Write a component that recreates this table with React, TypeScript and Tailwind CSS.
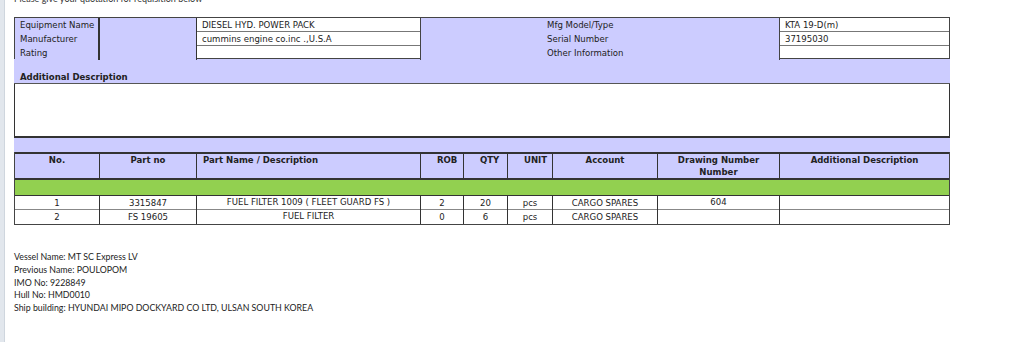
import React from "react";

const cols = "grid grid-cols-[85px_97px_224px_43px_44px_45px_105px_122px_1fr]";

const headers = ["No.", "Part no", "Part Name / Description", "ROB", "QTY", "UNIT", "Account", "Drawing Number Number", "Additional Description"];

const items = [
  { no: "1", part: "3315847", name: "FUEL FILTER 1009 ( FLEET GUARD FS )", rob: "2", qty: "20", unit: "pcs", account: "CARGO SPARES", drawing: "604", desc: "" },
  { no: "2", part: "FS 19605", name: "FUEL FILTER", rob: "0", qty: "6", unit: "pcs", account: "CARGO SPARES", drawing: "", desc: "" },
];

const vessel = [
  "Vessel Name: MT SC Express LV",
  "Previous Name: POULOPOM",
  "IMO No: 9228849",
  "Hull No: HMD0010",
  "Ship building: HYUNDAI MIPO DOCKYARD CO LTD, ULSAN SOUTH KOREA",
];

export default function App() {
  return (
    <div className="flex h-[342px] w-[1024px] overflow-hidden bg-white">
      <div className="w-[5px] shrink-0 border-r border-[#cfd6de] bg-[#e2e7ed]" />
      <div className="pl-[9px] text-[#222] [font-family:'DejaVu_Sans_Condensed','DejaVu_Sans',Verdana,sans-serif] text-[9.5px]">
        <div className="h-[17px] overflow-hidden">
          <p className="-mt-[7px] leading-[12px] text-[9px] text-[#333] [font-family:Lato,'Liberation_Sans',sans-serif]">
            Please give your quotation for requisition below
          </p>
        </div>

        {/* equipment info */}
        <div className="grid h-[42px] w-[936px] grid-cols-[85px_97px_224px_359px_1fr] border border-[#444] whitespace-nowrap">
          <div className="border-r-2 border-[#333] bg-[#ccccff] pl-[5px] leading-[14px]">
            <p>Equipment Name</p>
            <p>Manufacturer</p>
            <p>Rating</p>
          </div>
          <div className="border-r border-[#333] bg-[#ccccff]" />
          <div className="flex flex-col border-r border-[#444]">
            <div className="h-[14px] border-b border-[#777] px-[5px] leading-[13px]">DIESEL HYD. POWER PACK</div>
            <div className="h-[14px] border-b border-[#777] px-[5px] leading-[13px]">cummins engine co.inc .,U.S.A</div>
            <div className="flex-1" />
          </div>
          <div className="border-r border-[#444] bg-[#ccccff] pl-[126px] leading-[14px]">
            <p>Mfg Model/Type</p>
            <p>Serial Number</p>
            <p>Other Information</p>
          </div>
          <div className="flex flex-col">
            <div className="h-[14px] border-b border-[#777] px-[5px] leading-[13px]">KTA 19-D(m)</div>
            <div className="h-[14px] border-b border-[#777] px-[5px] leading-[13px]">37195030</div>
            <div className="flex-1" />
          </div>
        </div>

        <div className="flex h-[25px] w-[936px] items-end border-b border-[#555] bg-[#ccccff] px-[6px]">
          <span className="font-bold leading-[12px]">Additional Description</span>
        </div>
        <div className="h-[54px] w-[936px] border-x border-b-2 border-[#333]" />
        <div className="h-[14px] w-[936px] bg-[#ccccff]" />

        {/* parts */}
        <div className="w-[936px] border-x border-b border-[#444]">
          <div className={`${cols} h-[28px] border-y-2 border-[#333] bg-[#ccccff] font-bold`}>
            {headers.map((h, i) => (
              <div
                key={h}
                className={`${i < 8 ? "border-r border-[#333]" : ""} ${i === 2 ? "px-[6px] text-left" : "px-[16px] text-center"} leading-[12px]`}
              >
                {h}
              </div>
            ))}
          </div>
          <div className="h-[16px] border-b border-[#333] bg-[#92d050]" />
          {items.map((it, r) => (
            <div key={it.no} className={`${cols} h-[14px] ${r === 0 ? "border-b border-[#888]" : ""}`}>
              {[it.no, it.part, it.name, it.rob, it.qty, it.unit, it.account, it.drawing, it.desc].map((v, i) => (
                <div
                  key={i}
                  className={`${i < 8 ? "border-r border-[#333]" : ""} whitespace-nowrap text-center ${i === 2 || i === 7 ? "leading-[11px]" : "leading-[14px]"}`}
                >
                  {v}
                </div>
              ))}
            </div>
          ))}
        </div>

        <div className="pt-[26px] text-[8.8px] leading-[12.8px] text-[#222] [font-family:Lato,'Liberation_Sans',sans-serif]">
          {vessel.map((l) => (
            <p key={l}>{l}</p>
          ))}
        </div>
      </div>
    </div>
  );
}
